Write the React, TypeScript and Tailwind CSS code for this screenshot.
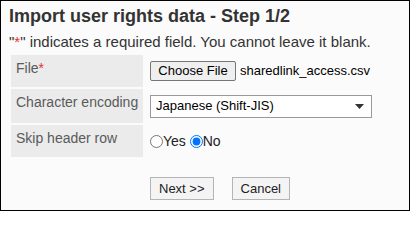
import React from "react";

const font = "font-['Liberation_Sans',Arial,sans-serif]";

const rows = [
  { label: "File", required: true, h: "h-[32px]" },
  { label: "Character encoding", required: false, h: "h-[34px]" },
  { label: "Skip header row", required: false, h: "h-[32px]" },
];

function FileField() {
  return (
    <div className="flex items-center gap-[4px]">
      <span className="flex h-[20px] w-[86px] items-center justify-center rounded-[2px] border border-[#767676] bg-[#efefef] text-[13px] text-black">
        Choose File
      </span>
      <span className="text-[13px] text-black">sharedlink_access.csv</span>
    </div>
  );
}

function EncodingSelect() {
  return (
    <div className="flex h-[23px] w-[222px] items-center justify-between border border-[#999999] bg-white pl-[5px] pr-[7px] text-[13px] text-black">
      <span>Japanese (Shift-JIS)</span>
      <svg width="9" height="5" viewBox="0 0 9 5">
        <path d="M0 0h9L4.5 5z" fill="#333" />
      </svg>
    </div>
  );
}

function HeaderRadios() {
  return (
    <div className="flex items-center text-[14px] text-[#222]">
      <input type="radio" name="skip" className="m-0 h-[13px] w-[13px]" />
      <span>Yes&nbsp;</span>
      <input
        type="radio"
        name="skip"
        defaultChecked
        className="m-0 h-[13px] w-[13px]"
      />
      <span>No</span>
    </div>
  );
}

export default function App() {
  const fields = [<FileField />, <EncodingSelect />, <HeaderRadios />];
  return (
    <div
      className={`${font} box-border h-[211px] w-[410px] border border-black bg-[#fbfbfb] pt-[5px] text-[#333]`}
    >
      <h1 className="pl-[8px] text-[18px] font-bold leading-[20px] text-[#333]">
        Import user rights data - Step 1/2
      </h1>
      <p className="mt-[8px] pl-[8px] text-[15px] leading-[16px] text-[#333]">
        "<span className="text-[#e5312f]">*</span>" indicates a required
        field. You cannot leave it blank.
      </p>
      <div className="mt-[5px] ml-[10px] grid grid-cols-[132px_1fr] gap-[2px]">
        {rows.map((r, i) => (
          <React.Fragment key={r.label}>
            <div
              className={`${r.h} bg-[#ebebeb] pl-[5px] pt-[5px] text-[14px] leading-[17px] text-[#5a5a5a]`}
            >
              {r.label}
              {r.required && <span className="text-[#e5312f]">*</span>}
            </div>
            <div className={`${r.h} flex items-center pl-[5px]`}>
              {fields[i]}
            </div>
          </React.Fragment>
        ))}
      </div>
      <div className="mt-[20px] flex gap-[18px] pl-[149px]">
        <button className="h-[23px] border border-[#b4b4b4] bg-[#f4f4f4] px-[8px] text-[13px] text-[#222]">
          Next &gt;&gt;
        </button>
        <button className="h-[23px] border border-[#b4b4b4] bg-[#f4f4f4] px-[8px] text-[13px] text-[#222]">
          Cancel
        </button>
      </div>
    </div>
  );
}
